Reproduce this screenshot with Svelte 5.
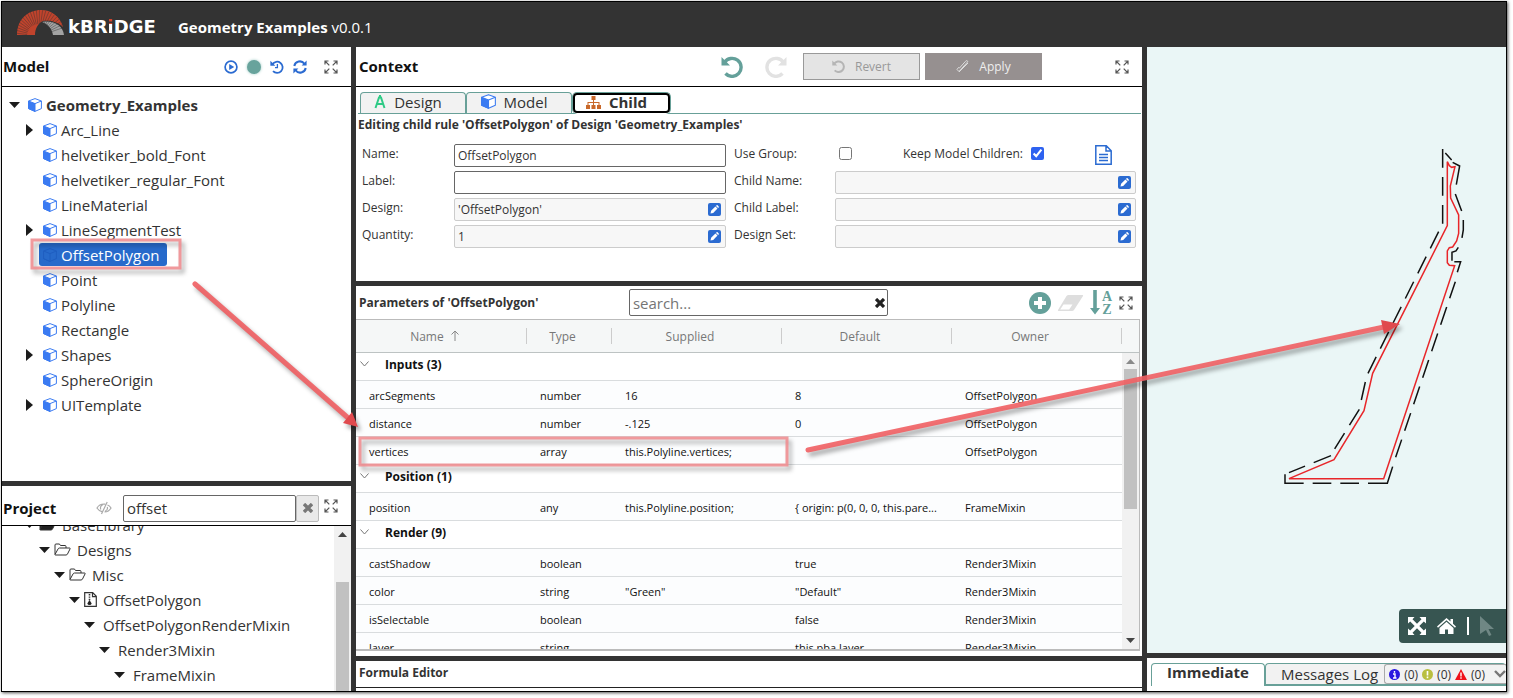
<script lang="ts">
  type TreeNode = { label: string; level: number; caret?: string; icon?: string };
  type Row = { name: string; type: string; supplied?: string; def?: string; owner: string };

  const modelTree: TreeNode[] = [
    { label: "Geometry_Examples", level: 0, caret: "down" },
    { label: "Arc_Line", level: 1, caret: "right" },
    { label: "helvetiker_bold_Font", level: 1 },
    { label: "helvetiker_regular_Font", level: 1 },
    { label: "LineMaterial", level: 1 },
    { label: "LineSegmentTest", level: 1, caret: "right" },
    { label: "OffsetPolygon", level: 1 },
    { label: "Point", level: 1 },
    { label: "Polyline", level: 1 },
    { label: "Rectangle", level: 1 },
    { label: "Shapes", level: 1, caret: "right" },
    { label: "SphereOrigin", level: 1 },
    { label: "UITemplate", level: 1, caret: "right" },
  ];

  const projectTree: TreeNode[] = [
    { label: "BaseLibrary", level: 1, icon: "library" },
    { label: "Designs", level: 2, icon: "folder" },
    { label: "Misc", level: 3, icon: "folder" },
    { label: "OffsetPolygon", level: 4, icon: "file" },
    { label: "OffsetPolygonRenderMixin", level: 5 },
    { label: "Render3Mixin", level: 6 },
    { label: "FrameMixin", level: 7 },
  ];

  const groups: Array<{ title: string; rows: Row[] }> = [
    {
      title: "Inputs (3)",
      rows: [
        { name: "arcSegments", type: "number", supplied: "16", def: "8", owner: "OffsetPolygon" },
        { name: "distance", type: "number", supplied: "-.125", def: "0", owner: "OffsetPolygon" },
        { name: "vertices", type: "array", supplied: "this.Polyline.vertices;", owner: "OffsetPolygon" },
      ],
    },
    {
      title: "Position (1)",
      rows: [
        { name: "position", type: "any", supplied: "this.Polyline.position;", def: "{ origin: p(0, 0, 0, this.pare...", owner: "FrameMixin" },
      ],
    },
    {
      title: "Render (9)",
      rows: [
        { name: "castShadow", type: "boolean", def: "true", owner: "Render3Mixin" },
        { name: "color", type: "string", supplied: '"Green"', def: '"Default"', owner: "Render3Mixin" },
        { name: "isSelectable", type: "boolean", def: "false", owner: "Render3Mixin" },
        { name: "layer", type: "string", def: "this.pba.layer", owner: "Render3Mixin" },
      ],
    },
  ];

  // rays of the logo arch, in degrees
  const rays = Array.from({ length: 24 }, (_, i) => 180 - i * 7);

  let selected = $state("OffsetPolygon");
  let name = $state("OffsetPolygon");
  let label = $state("");
  let filter = $state("offset");
  let search = $state("");
  let useGroup = $state(false);
  let keepChildren = $state(true);
</script>

{#snippet expandIcon()}
  <svg width="14" height="14" viewBox="0 0 14 14" fill="none" stroke="#555" stroke-width="1.2">
    <path d="M1 4.500V1h3.500M1 1l4.300 4.300M9.500 1H13v3.500M13 1L8.700 5.300M1 9.500V13h3.500M1 13l4.300-4.300M13 9.500V13H9.500M13 13L8.700 8.700" />
  </svg>
{/snippet}

{#snippet cubeIcon(size: number)}
  <svg width={size} height={size} viewBox="0 0 14 14" fill="none" stroke="#3b7bf2" stroke-linejoin="round">
    <path d="M7 .6L13.4 3v7.6L7 13.4.6 10.6V3z" fill="#fff" />
    <path d="M.6 3L7 5.6v7.8L.6 10.6z" fill="#3b7bf2" />
    <path d="M7 5.6L13.4 3" />
  </svg>
{/snippet}

{#snippet caret(dir: string | undefined)}
  <svg class="caret" width="11" height="12" viewBox="0 0 11 12" fill="#1c1c1c">
    {#if dir === "down"}
      <path d="M0 3h11L5.5 9z" />
    {:else if dir === "right"}
      <path d="M2 0l7 6-7 6z" />
    {/if}
  </svg>
{/snippet}

{#snippet undoIcon(size: number, color: string, flip: boolean)}
  <svg width={size} height={size} viewBox="0 0 22 22" fill="none" stroke={color} stroke-width="3.4">
    <g transform={flip ? "translate(22 0) scale(-1 1)" : undefined}>
      <path d="M3.5 6.5A9 9 0 1 1 4.5 17.5" />
      <path d="M.5 1v8.5H9L6.3 6.8 3 3.5z" fill={color} stroke="none" />
    </g>
  </svg>
{/snippet}

{#snippet editButton(what: string)}
  <button type="button" class="edit" aria-label={`Edit ${what}`}>
    <svg width="13" height="13" viewBox="0 0 13 13" fill="#fff">
      <path d="M2.5 10.5l.6-2.7 4.3-4.3 2.1 2.1-4.3 4.3zM8 2.9l.6-.6q.5-.4 1 0l1.1 1.1q.4.5 0 1l-.6.6z" />
    </svg>
  </button>
{/snippet}

{#snippet scrollArrow(dir: string)}
  <svg width="9" height="5" viewBox="0 0 9 5" fill={dir === "gray" ? "#8a8a8a" : "#444"}>
    <path d={dir === "down" ? "M0 0h9L4.5 5z" : "M0 5h9L4.5 0z"} />
  </svg>
{/snippet}

<div class="page">
  <div class="app">
    <header class="topbar">
      <svg class="arch" width="48" height="26" viewBox="0 0 48 26">
        <path d="M0 26C0 10 11 1 24 1c10 0 19 6 22 17-6-6-14-7-20-6-5 2-8 8-8 14z" fill="#c0432c" />
        <path d="M25 13c12-2 21 4 22 13H36c-1-6-5-11-11-13z" fill="#a3a3a3" />
        {#each rays as angle}
          <path d="M12 0h14" stroke="#333" stroke-width=".4" transform={`translate(22 27) rotate(${-angle})`} />
        {/each}
      </svg>
      <span class="brand">kBR<span class="brand-i">i</span>DGE</span>
      <h1>Geometry Examples <span>v0.0.1</span></h1>
    </header>

    <main class="columns">
      <div class="column left">
        <section class="panel">
          <header class="panel-head">
            <h2>Model</h2>
            <div class="model-tools">
              <button aria-label="Run">
                <svg width="14" height="14" viewBox="0 0 14 14" fill="none" stroke="#2b6bd1" stroke-width="1.7">
                  <circle cx="7" cy="7" r="5.9" /><path d="M5.2 4l5 3-5 3z" fill="#2b6bd1" stroke="none" />
                </svg>
              </button>
              <span class="status-dot"></span>
              <button aria-label="History">
                <svg width="14" height="14" viewBox="0 0 14 14" fill="none" stroke="#2b6bd1" stroke-width="1.8">
                  <path d="M2.4 4.2A5.6 5.6 0 1 1 3 11.2" /><path d="M.4.8v5h5z" fill="#2b6bd1" stroke="none" /><path d="M7.4 4v3.6H5" stroke-width="1.3" />
                </svg>
              </button>
              <button aria-label="Refresh">
                <svg width="14" height="14" viewBox="0 0 14 14" fill="none" stroke="#2b6bd1" stroke-width="2">
                  <path d="M1.3 6A5.6 5.6 0 0 1 11.4 3.8M12.7 8A5.6 5.6 0 0 1 2.6 10.2" /><path d="M13.6.6v5h-5zM.4 13.4v-5h5z" fill="#2b6bd1" stroke="none" />
                </svg>
              </button>
            </div>
            <button aria-label="Expand model">{@render expandIcon()}</button>
          </header>
          <ul class="tree">
            {#each modelTree as node}
              <li class:root={node.level === 0}>
                {@render caret(node.caret)}
                <button class="node" class:selected={node.label === selected} onclick={() => (selected = node.label)}>
                  {@render cubeIcon(14)}{node.label}
                </button>
              </li>
            {/each}
          </ul>
        </section>

        <section class="panel">
          <header class="panel-head project-head">
            <h2>Project</h2>
            <svg class="eye" width="16" height="14" viewBox="0 0 16 14" fill="none" stroke="#aaa" stroke-width="1.2">
              <path d="M6 10.6C3.600 10 2 8.600 1 7c1.500-2.600 4-4 7-4l1.300.1M11.500 4C13 4.600 14.200 5.600 15 7c-1.400 2.500-3.700 3.900-6.500 4M4.800 8.500A3.500 3.500 0 0 1 7 3.700M11.300 6a3.500 3.500 0 0 1-2.300 4.200M11.200 1L5.500 13" />
            </svg>
            <div class="filter">
              <input aria-label="Filter project" bind:value={filter} />
              <button aria-label="Clear filter" onclick={() => (filter = "")}>
                <svg width="10" height="10" viewBox="0 0 10 10" stroke="#777" stroke-width="3.4"><path d="M1 1l8 8M9 1L1 9" /></svg>
              </button>
            </div>
            <button class="project-expand" aria-label="Expand project">{@render expandIcon()}</button>
          </header>
          <div class="project-body">
            <ul class="tree project-tree">
              {#each projectTree as node}
                <li style:padding-left={`${7 + node.level * 15}px`}>
                  {@render caret("down")}
                  {#if node.icon === "folder" || node.icon === "library"}
                    <svg width="17" height="13" viewBox="0 0 17 13" fill={node.icon === "library" ? "#222" : "none"} stroke="#333">
                      <path d="M1 11V2q0-1 1-1h3q1 0 1.500 1.500H11q1 0 1 1V5M1 11.500L4 6q.5-1 1.500-1h10q1 0 .5 1l-2.500 5q-.5 1-1.500 1H1.500q-.8 0-.5-.7z" />
                    </svg>
                  {:else if node.icon === "file"}
                    <svg width="13" height="15" viewBox="0 0 13 15" fill="none" stroke="#333" stroke-width="1.200">
                      <path d="M.7.7h8l3.600 3.600v10H.7zM8.500 1v3.600h3.500" /><path d="M5.500 2v7" stroke-width="1.600" stroke-dasharray="1.400 1" /><path d="M5.500 8l2.200 3.500q-.4 1.500-2.200 1.500t-2.200-1.500z" fill="#222" stroke="none" />
                    </svg>
                  {/if}
                  <span class:plain={!node.icon}>{node.label}</span>
                </li>
              {/each}
            </ul>
            <div class="scrollbar">
              {@render scrollArrow("up")}
              <div class="thumb low"></div>
            </div>
          </div>
        </section>
      </div>

      <div class="column center">
        <section class="panel context">
          <header class="panel-head context-head">
            <h2>Context</h2>
            <div class="history">
              <button aria-label="Undo">{@render undoIcon(22, "#64a09a", false)}</button>
              <button aria-label="Redo">{@render undoIcon(22, "#e2e2e2", true)}</button>
            </div>
            <div class="actions">
              <button class="revert">{@render undoIcon(13, "#b5b5b5", false)}Revert</button>
              <button class="apply">
                <svg width="13" height="13" viewBox="0 0 13 13" fill="none" stroke="#ddd">
                  <path d="M1 9.500L3 11.500 11.500 2q.5-1-.3-1.300T9.500 1.300L3.500 8 2.500 7.500zM3 12l9-9" />
                </svg>Apply
              </button>
            </div>
            <button aria-label="Expand context">{@render expandIcon()}</button>
          </header>
          <nav class="tabs">
            <button class="tab">
              <svg width="12" height="14" viewBox="0 0 12 14" fill="none" stroke="#2fca86" stroke-width="2"><path d="M1.500 13L5 2.500h2L10.500 13M2.500 9h7M6 0v3" /></svg>
              Design
            </button>
            <button class="tab">{@render cubeIcon(15)}Model</button>
            <button class="tab current">
              <svg width="15" height="13" viewBox="0 0 15 13" fill="#c9692b">
                <path d="M5.500 0h4v4h-4zM0 9h4v4H0zM5.500 9h4v4h-4zM11 9h4v4h-4zM7 4h1v2h5.500v3h-1V7H8v2H7V7H2.500v2h-1V6H7z" />
              </svg>
              Child
            </button>
          </nav>
          <h3>Editing child rule 'OffsetPolygon' of Design 'Geometry_Examples'</h3>
          <form class="rule-form">
            <label for="rule-name">Name:</label>
            <input id="rule-name" bind:value={name} />
            <label class="second" for="use-group">Use Group:</label>
            <div class="flags">
              <input id="use-group" type="checkbox" bind:checked={useGroup} />
              <label for="keep-children">Keep Model Children:</label>
              <input id="keep-children" type="checkbox" bind:checked={keepChildren} />
              <button type="button" aria-label="Notes">
                <svg width="17" height="20" viewBox="0 0 17 20" fill="none" stroke="#2b6bd1" stroke-width="1.500">
                  <path d="M.8.8h10.500l4.900 5v13.400H.8zM11 1v5h5M4 9.500h9M4 12.500h9M4 15.500h9" />
                </svg>
              </button>
            </div>

            <label for="rule-label">Label:</label>
            <input id="rule-label" bind:value={label} />
            <label class="second" for="child-name">Child Name:</label>
            <div class="field"><input id="child-name" readonly />{@render editButton("child name")}</div>

            <label for="rule-design">Design:</label>
            <div class="field"><input id="rule-design" readonly value="'OffsetPolygon'" />{@render editButton("design")}</div>
            <label class="second" for="child-label">Child Label:</label>
            <div class="field"><input id="child-label" readonly />{@render editButton("child label")}</div>

            <label for="quantity">Quantity:</label>
            <div class="field"><input id="quantity" readonly value="1" />{@render editButton("quantity")}</div>
            <label class="second" for="design-set">Design Set:</label>
            <div class="field"><input id="design-set" readonly />{@render editButton("design set")}</div>
          </form>
        </section>

        <section class="panel params">
          <header class="params-head">
            <h3>Parameters of 'OffsetPolygon'</h3>
            <div class="search">
              <input aria-label="Search parameters" placeholder="search..." bind:value={search} />
              <button aria-label="Clear search" onclick={() => (search = "")}>
                <svg width="10" height="10" viewBox="0 0 10 10" stroke="#222" stroke-width="3.200"><path d="M1 1l8 8M9 1L1 9" /></svg>
              </button>
            </div>
            <div class="params-tools">
              <button aria-label="Add parameter">
                <svg width="22" height="22" viewBox="0 0 22 22"><circle cx="11" cy="11" r="11" fill="#64a09a" /><path d="M11 5v12M5 11h12" stroke="#fff" stroke-width="4" /></svg>
              </button>
              <button aria-label="Erase">
                <svg width="27" height="18" viewBox="0 0 27 18"><path d="M11.500 1h14q1 0 .5 1L17 16q-.7 1-2 1H1.500q-1 0-.5-1L9.500 2q.8-1 2-1z" fill="#dedede" /><path d="M6.500 10.500h9l-3.300 5H3.200z" fill="#fff" /></svg>
              </button>
              <button class="sort" aria-label="Sort by name">
                <svg width="10" height="25" viewBox="0 0 10 25" fill="#64a09a"><path d="M3.200 0h3.600v18H10l-5 6.500L0 18h3.200z" /></svg>
                <span>A<br />Z</span>
              </button>
              <button aria-label="Expand parameters">{@render expandIcon()}</button>
            </div>
          </header>
          <div class="grid">
            <div class="grid-main">
              <table>
                <colgroup>
                  <col class="c-name" /><col class="c-type" /><col class="c-wide" /><col class="c-wide" /><col class="c-wide" />
                </colgroup>
                <thead>
                  <tr>
                    <th>
                      Name
                      <svg width="8" height="11" viewBox="0 0 8 11" fill="none" stroke="#888"><path d="M4 11V1M.5 4.500L4 1l3.500 3.500" /></svg>
                    </th>
                    <th>Type</th>
                    <th>Supplied</th>
                    <th>Default</th>
                    <th>Owner</th>
                  </tr>
                </thead>
                {#each groups as group}
                  <tbody>
                    <tr class="group">
                      <td colspan="5">
                        <svg width="9" height="6" viewBox="0 0 9 6" fill="none" stroke="#777"><path d="M.5.5l4 4.500 4-4.500" /></svg>{group.title}
                      </td>
                    </tr>
                    {#each group.rows as row}
                      <tr>
                        <td>{row.name}</td>
                        <td>{row.type}</td>
                        <td>{row.supplied ?? ""}</td>
                        <td>{row.def ?? ""}</td>
                        <td>{row.owner}</td>
                      </tr>
                    {/each}
                  </tbody>
                {/each}
              </table>
            </div>
            <div class="grid-side">
              <div class="scrollbar">
                {@render scrollArrow("gray")}
                <div class="thumb high"></div>
                {@render scrollArrow("down")}
              </div>
            </div>
          </div>
        </section>

        <section class="panel formula">
          <h3>Formula Editor</h3>
        </section>
      </div>

      <div class="column right">
        <section class="viewer">
          <svg class="drawing" viewBox="0 0 359 606" fill="none">
            <g transform="translate(113 83) scale(.3333)">
              <path
                d="M562 95L568 107 575 112 585 110 571 168 572 204 596 255V310L590 333 578 351 568 353 562 363V398L568 406 584 407 371 1046H87L222 989 312 842 338 730 562 287z"
                stroke="#e8262a"
                stroke-width="4.500"
              />
              <g stroke="#111" stroke-width="4.500">
                <path d="M548 57V283M536 305L324 730M316 756L304 810M298 838L222 960M213 977L87 1028" stroke-dasharray="56 28" />
                <path d="M75 1033V1060H131M158 1060H214M241 1060H297M324 1060H382L398 1010" />
                <path d="M407 982L586 455" stroke-dasharray="56 28" />
                <path d="M592 427L602 395H583M576 392V367L588 363 595 352M606 324L610 300V270M605 243L586 192M589 164L599 108 578 97M575 90L556 69" />
              </g>
            </g>
          </svg>
          <div class="view-tools">
            <button aria-label="Fit view">
              <svg width="18" height="18" viewBox="0 0 18 18" fill="#fff"><path d="M0 0h6.500L4.500 2.200 9 6.700l4.500-4.500L11.500 0H18v6.500l-2.200-2L11.300 9l4.500 4.500 2.200-2V18h-6.500l2-2.200L9 11.300l-4.500 4.500 2 2.200H0v-6.500l2.200 2L6.700 9 2.200 4.500 0 6.500z" /></svg>
            </button>
            <button aria-label="Home view">
              <svg width="19" height="16" viewBox="0 0 19 16" fill="#fff"><path d="M9.500 0l4 3.600V1H16v4.800l3 2.700-1 1.200-8.500-7.500L1 9.700 0 8.500zM9.500 3.700L16.500 10v6H11v-4.500H8V16H2.500v-6z" /></svg>
            </button>
            <span class="divider"></span>
            <button aria-label="Select">
              <svg width="14" height="20" viewBox="0 0 14 20" fill="#6f8784"><path d="M0 0l14 13H8.500l3 6-2.500 1-3-6L0 18z" /></svg>
            </button>
          </div>
        </section>
        <section class="console">
          <button class="log-tab active">Immediate</button>
          <div class="log-tab messages">
            <button>Messages Log</button>
            <div class="counts">
              <svg width="11" height="11" viewBox="0 0 11 11"><circle cx="5.500" cy="5.500" r="5.500" fill="#2a17e0" /><path d="M5.500 2v1.800M4 5h2v4M4 9h3.500" stroke="#fff" stroke-width="1.400" fill="none" /></svg>(0)
              <svg width="11" height="11" viewBox="0 0 11 11"><circle cx="5.500" cy="5.500" r="5.500" fill="#b9bf3f" /><path d="M5.500 2v4.500M5.500 7.500v1.700" stroke="#fff" stroke-width="1.600" /></svg>(0)
              <svg width="12" height="11" viewBox="0 0 12 11"><path d="M6 0l6 11H0z" fill="#f0121b" /><path d="M6 3.500v4M6 8.300v1.400" stroke="#fff" stroke-width="1.400" /></svg>(0)
              <svg class="chevron" width="12" height="8" viewBox="0 0 12 8" fill="none" stroke="#777" stroke-width="2.400"><path d="M1 1l5 5 5-5" /></svg>
            </div>
          </div>
        </section>
      </div>
    </main>
  </div>

  <!-- callouts drawn over the panels -->
  <svg class="callouts" viewBox="0 0 1513 698" preserveAspectRatio="none" fill="none">
    <g stroke="#f0898d" stroke-opacity=".85" stroke-width="3">
      <path d="M32 240h148v28H32z" />
      <path d="M360 438h427v27H360z" />
    </g>
    <g stroke="#ef5f63" stroke-opacity=".9" stroke-width="5" stroke-linecap="round">
      <path d="M195 284L347 417" />
      <path d="M808 450L1384 327" />
    </g>
    <path d="M358 427l-15-4 9-11zM1400 324l-16 10-3-14z" fill="#e04a4e" />
  </svg>
</div>

<style>
  :global(body) {
    background: #fff;
  }

  .page {
    position: relative;
    box-sizing: border-box;
    height: 100vh;
    padding: 1px 6px 6px 1px;
    font-family: "Open Sans", "Noto Sans", sans-serif;
    font-size: 12px;
    color: #333;
  }

  .page :global(*) {
    box-sizing: border-box;
  }

  .app {
    display: flex;
    flex-direction: column;
    height: 100%;
    border: 1px solid #000;
    box-shadow: 1px 1px 3px #555;
    overflow: hidden;
  }

  button {
    display: flex;
    align-items: center;
    padding: 0;
    border: 0;
    background: none;
    font: inherit;
    color: inherit;
    cursor: pointer;
  }

  input {
    min-width: 0;
    margin: 0;
    font: inherit;
    color: inherit;
  }

  svg {
    flex: none;
  }

  h1,
  h2,
  h3 {
    margin: 0;
  }

  h2 {
    padding-bottom: 2px;
    font-size: 15px;
    line-height: 20px;
    color: #111;
  }

  h3 {
    font-size: 12px;
    line-height: 16px;
  }

  .topbar {
    flex: none;
    display: flex;
    align-items: center;
    height: 45px;
    padding: 4px 15px 0;
    background: #333;
    color: #fff;
  }

  .arch {
    margin-bottom: 10px;
  }

  .brand {
    width: 92px;
    margin-left: 3px;
    font: 700 18px/24px "DejaVu Sans", sans-serif;
  }

  .brand-i {
    background: linear-gradient(#d0452f 40%, #fff 40%);
    background-clip: text;
    color: transparent;
  }

  h1 {
    margin-left: 18px;
    font-size: 15px;
    line-height: 20px;
  }

  h1 span {
    font-weight: 400;
  }

  .columns {
    flex: 1;
    min-height: 0;
    display: grid;
    grid-template-columns: minmax(0, 349fr) minmax(0, 786fr) minmax(0, 359fr);
    gap: 5px;
    background: #333;
  }

  .column {
    display: grid;
    gap: 5px;
    min-height: 0;
  }

  .left {
    grid-template-rows: minmax(0, 434fr) minmax(0, 205fr);
  }

  .center {
    grid-template-rows: 234px minmax(0, 1fr) 30px;
  }

  .right {
    grid-template-rows: minmax(0, 1fr) 33px;
  }

  .panel {
    display: flex;
    flex-direction: column;
    min-height: 0;
    background: #fff;
    overflow: hidden;
  }

  .panel-head {
    flex: none;
    display: flex;
    align-items: center;
    height: 40px;
    padding: 0 13px 0 1px;
    border-bottom: 1px solid #000;
  }

  .project-head {
    padding-top: 5px;
  }

  .project-head h2 {
    padding: 0;
  }

  .project-expand {
    margin-bottom: 4px;
  }

  .model-tools {
    display: flex;
    align-items: center;
    gap: 9px;
    margin: 0 17px 0 auto;
  }

  .status-dot {
    width: 14px;
    height: 14px;
    border-radius: 50%;
    background: #68a39c;
    box-shadow: 0 0 3px #9cc9c3;
  }

  .tree {
    margin: 0;
    padding: 5px 0 0 7px;
    list-style: none;
    font-size: 15px;
  }

  .tree li {
    display: flex;
    align-items: center;
    height: 25px;
    padding-left: 15px;
    white-space: nowrap;
  }

  .tree li.root {
    padding-left: 0;
    font-weight: 700;
  }

  .caret {
    margin-right: 4px;
  }

  .node {
    gap: 4px;
    height: 23px;
    padding: 0 8px 0 4px;
    border-radius: 3px;
  }

  .node.selected {
    background: #276acb;
    color: #fff;
  }

  .node.selected :global(svg path) {
    fill: #276acb;
    stroke: #1f5ec0;
  }

  .eye {
    margin-left: auto;
  }

  .filter {
    display: flex;
    width: 196px;
    height: 27px;
    margin: 0 5px 0 11px;
    font-size: 15px;
  }

  .filter input {
    flex: 1;
    padding: 0 3px;
    border: 1px solid #666;
    border-radius: 2px;
  }

  .filter button {
    justify-content: center;
    width: 23px;
    border: 1px solid #bbb;
    border-radius: 2px;
    background: #e9e9e9;
  }

  .project-body {
    flex: 1;
    min-height: 0;
    display: flex;
    overflow: hidden;
  }

  .project-tree {
    flex: 1;
    margin-top: -14px;
    padding: 0;
  }

  .project-tree span {
    margin-left: 6px;
  }

  .project-tree .plain {
    margin-left: 4px;
  }

  .scrollbar {
    display: flex;
    flex-direction: column;
    align-items: center;
    width: 17px;
    background: #f1f1f1;
    padding: 6px 2px;
  }

  .thumb {
    width: 13px;
    background: #c1c1c1;
  }

  .thumb.low {
    flex: 1;
    margin: 45px 0 -6px;
  }

  .thumb.high {
    height: 140px;
    margin: 5px 0 auto;
  }

  .context-head,
  .params-head {
    padding-left: 3px;
  }

  .history {
    display: flex;
    gap: 22px;
    margin-left: auto;
  }

  .actions {
    display: flex;
    gap: 5px;
    margin: 0 73px 0 16px;
  }

  .actions button {
    justify-content: center;
    gap: 10px;
    width: 117px;
    height: 27px;
    border: 1px solid #999;
    background: #e4e4e4;
    color: #999;
  }

  .actions .apply {
    border-color: #969090;
    background: #969090;
    color: #eee;
  }

  .tabs {
    flex: none;
    display: flex;
    height: 22px;
    margin: 5px 1px 0 2px;
    padding-left: 2px;
    border-bottom: 1px solid #68a098;
    font-size: 15px;
  }

  .tab {
    justify-content: center;
    gap: 8px;
    width: 106px;
    padding: 0 10px 3px 0;
    border: 1px solid #68a098;
    border-bottom: 0;
    border-radius: 4px 4px 0 0;
    background: #f2f2f2;
    line-height: 18px;
  }

  .tab.current {
    width: 99px;
    height: 22px;
    outline: 2px solid #000;
    outline-offset: -3px;
    border-radius: 5px;
    background: #fff;
    font-weight: 700;
  }

  .context h3 {
    margin: 3px 0 0 2px;
  }

  .rule-form {
    display: grid;
    grid-template-columns: 92px minmax(0, 272fr) 109px minmax(0, 301fr);
    grid-auto-rows: 23px;
    gap: 4px 0;
    margin: 11px 6px 0;
  }

  .rule-form label {
    line-height: 20px;
  }

  .rule-form .second {
    padding-left: 8px;
  }

  .rule-form > input,
  .field input {
    width: 100%;
    height: 23px;
    padding: 0 3px;
    border: 1px solid #666;
    border-radius: 2px;
  }

  .field {
    position: relative;
  }

  .field input {
    border-color: #ccc;
    background: #f7f7f7;
  }

  .edit {
    position: absolute;
    top: 5px;
    right: 5px;
    border-radius: 2px;
    background: #2b6bd1;
  }

  .flags {
    display: flex;
    align-items: flex-start;
  }

  .flags input {
    width: 13px;
    height: 13px;
    margin: 3px 0 0 4px;
  }

  .flags label {
    margin-left: auto;
  }

  .flags #keep-children {
    margin-left: 8px;
    accent-color: #2e62f0;
  }

  .flags button {
    margin: 1px 24px 0 51px;
  }

  .params-head {
    flex: none;
    display: flex;
    align-items: center;
    height: 33px;
    padding-right: 9px;
  }

  .search {
    position: relative;
    width: 259px;
    margin-left: auto;
  }

  .search input {
    width: 100%;
    height: 27px;
    padding: 0 3px;
    border: 1px solid #666;
    border-radius: 2px;
    font-size: 15px;
  }

  .search button {
    position: absolute;
    top: 9px;
    right: 3px;
  }

  .params-tools {
    display: flex;
    align-items: center;
    gap: 6px;
    margin-left: 141px;
  }

  .sort {
    gap: 2px;
    margin-right: 1px;
    font: 700 14px/13px "Liberation Serif", serif;
    color: #64a09a;
  }

  .grid {
    flex: 1;
    min-height: 0;
    display: flex;
    margin: 0 2px 5px 0;
    border: solid #bbb;
    border-width: 1px 1px 2px 0;
    overflow: hidden;
  }

  .grid-main {
    flex: 1;
    min-width: 0;
  }

  table {
    width: 100%;
    table-layout: fixed;
    border-collapse: collapse;
    color: #111;
  }

  .c-name {
    width: 171px;
  }

  .c-type {
    width: 85px;
  }

  th {
    height: 32px;
    padding: 2px 14px 0 0;
    border-bottom: 1px solid #bdc3c3;
    background: #f5f7f7 linear-gradient(#ccc, #ccc) right center / 1px 16px no-repeat;
    color: #777;
    font-weight: 400;
  }

  th svg {
    margin-left: 4px;
  }

  td {
    height: 28px;
    padding: 4px 13px 0;
    border-bottom: 1px solid #d9dcde;
    background: #fcfdfe;
    font-size: 11px;
    line-height: 16px;
    white-space: nowrap;
  }

  .group td {
    padding: 0 4px 3px;
    background: #fff;
    font-size: 12px;
    font-weight: 700;
  }

  .group svg {
    margin: 0 16px 2px 0;
  }

  .grid-side {
    display: flex;
    flex-direction: column;
    width: 17px;
  }

  .grid-side::before {
    content: "";
    flex: none;
    height: 32px;
    border-bottom: 1px solid #bdc3c3;
    background: #f5f7f7;
  }

  .grid-side .scrollbar {
    flex: 1;
  }

  .formula h3 {
    padding: 4px 3px 6px;
    border-bottom: 1px solid #222;
  }

  .viewer {
    position: relative;
    min-height: 0;
    background: #eaf6f6;
    overflow: hidden;
  }

  .drawing {
    display: block;
    width: 100%;
    height: 100%;
  }

  .view-tools {
    position: absolute;
    right: 0;
    bottom: 10px;
    display: flex;
    align-items: center;
    gap: 11px;
    height: 34px;
    padding: 0 12px 0 9px;
    border-radius: 4px 0 0 4px;
    background: #375551;
  }

  .divider {
    width: 2px;
    height: 18px;
    background: #fff;
  }

  .console {
    display: flex;
    align-items: flex-start;
    padding: 5px 0 0 4px;
    background: #fff;
    font-size: 15px;
    white-space: nowrap;
    overflow: hidden;
  }

  .log-tab {
    flex: none;
    justify-content: center;
    width: 114px;
    height: 23px;
    padding-bottom: 6px;
    border: 1px solid #68a098;
    border-bottom: 0;
    border-radius: 4px 4px 0 0;
    font-weight: 700;
  }

  .messages {
    flex: 1;
    display: flex;
    align-items: center;
    justify-content: flex-start;
    padding: 0 0 0 15px;
    border-width: 1px 0 2px 1px;
    border-style: solid;
    border-color: #68a098;
    background: #f2f2f2;
    font-weight: 400;
  }

  .counts {
    display: flex;
    align-items: center;
    gap: 4px;
    height: 20px;
    margin-left: auto;
    padding-left: 4px;
    border: 1px solid #aaa;
    border-width: 1px 0 1px 1px;
    border-radius: 3px 0 0 3px;
    font-size: 12px;
  }

  .chevron {
    margin-left: 5px;
  }

  .callouts {
    position: absolute;
    inset: 0;
    width: 100%;
    height: 100%;
    pointer-events: none;
    filter: drop-shadow(3px 4px 2px rgba(0, 0, 0, 0.35));
  }
</style>
